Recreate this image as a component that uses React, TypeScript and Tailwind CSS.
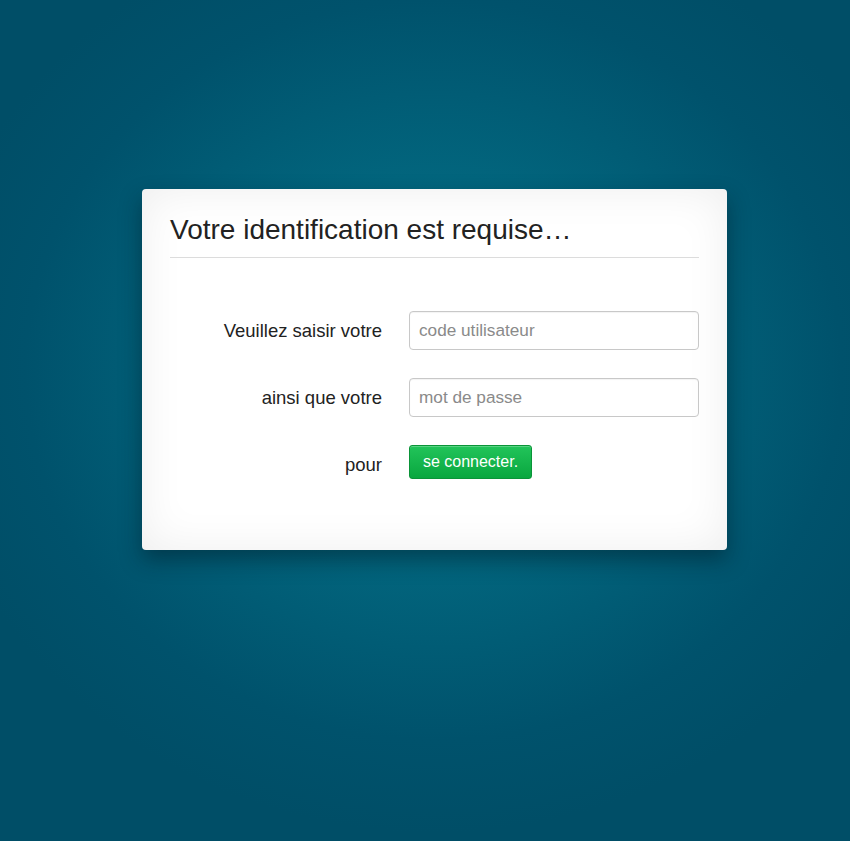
export default function App() {
  return (
    <div className="min-h-screen w-full bg-[radial-gradient(ellipse_60%_55%_at_51%_44%,#0f7a90_0%,#02667e_40%,#00526c_80%,#004e67_100%)] font-['Liberation_Sans',Arial,sans-serif]">
      <div className="pt-[189px] pl-[142px]">
        <div className="w-[585px] h-[361px] bg-white rounded-[4px] shadow-[0_10px_22px_rgba(0,20,30,0.45),inset_0_0_45px_rgba(0,0,0,0.07)] px-[28px] pt-[24px]">
          <h1 className="text-[28px] leading-[34px] text-[#222] pb-[10px] border-b border-[#dcdcdc]">
            Votre identification est requise…
          </h1>
          <form className="grid grid-cols-[212px_290px] gap-x-[27px] gap-y-[28px] mt-[53px] items-center" onSubmit={(e) => e.preventDefault()}>
            <label className="text-right text-[18.5px] text-[#222]">Veuillez saisir votre</label>
            <input
              className="h-[39px] w-full rounded-[4px] border border-[#c8c8c8] px-[9px] text-[17.2px] text-[#333] placeholder:text-[#8a8a8a] outline-none shadow-[inset_0_1px_1px_rgba(0,0,0,0.05)]"
              placeholder="code utilisateur"
            />
            <label className="text-right text-[18.5px] text-[#222]">ainsi que votre</label>
            <input
              type="password"
              className="h-[39px] w-full rounded-[4px] border border-[#c8c8c8] px-[9px] text-[17.2px] text-[#333] placeholder:text-[#8a8a8a] outline-none shadow-[inset_0_1px_1px_rgba(0,0,0,0.05)]"
              placeholder="mot de passe"
            />
            <label className="text-right text-[18.5px] text-[#222] pt-[6px]">pour</label>
            <div>
              <button className="h-[34px] w-[123px] rounded-[3px] border border-[#0a9438] bg-[linear-gradient(#22c45a,#09a73f)] text-white text-[16px] font-medium shadow-[inset_0_1px_0_rgba(255,255,255,0.25)]">
                se connecter.
              </button>
            </div>
          </form>
        </div>
      </div>
    </div>
  )
}
